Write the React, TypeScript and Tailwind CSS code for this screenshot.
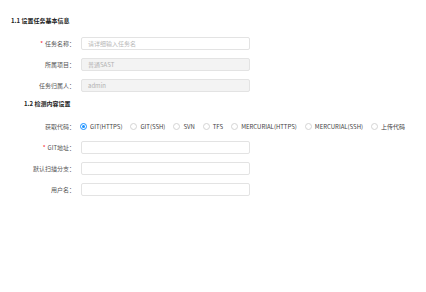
const radios = [
  "GIT(HTTPS)",
  "GIT(SSH)",
  "SVN",
  "TFS",
  "MERCURIAL(HTTPS)",
  "MERCURIAL(SSH)",
  "上传代码",
];

function Label({ text, required }: { text: string; required?: boolean }) {
  return (
    <div className="w-[75px] shrink-0 text-right text-[#555]">
      {required && <span className="mr-[2px] text-[#f5222d]">*</span>}
      {text}
    </div>
  );
}

function Field({
  label,
  required,
  placeholder,
  value,
  disabled,
}: {
  label: string;
  required?: boolean;
  placeholder?: string;
  value?: string;
  disabled?: boolean;
}) {
  return (
    <div className="flex h-[13px] items-center">
      <Label text={label} required={required} />
      <div
        className={`ml-[6px] flex h-[13px] w-[169px] items-center rounded-[2px] border border-[#e3e3e3] px-[6px] ${
          disabled ? "bg-[#f3f3f3] text-[#b0b0b0]" : "bg-white text-[#b8b8b8]"
        }`}
      >
        {value ?? placeholder}
      </div>
    </div>
  );
}

export default function App() {
  return (
    <div className="h-[292px] w-[426px] bg-white font-['Noto_Sans_CJK_SC',sans-serif] text-[6px] leading-[8px]">
      <div className="flex flex-col pt-[17px]">
        <div className="pl-[11px] font-bold text-[#222]">1.1 设置任务基本信息</div>

        <div className="mt-[12px] flex flex-col gap-[8px]">
          <Field label="任务名称：" required placeholder="请详细输入任务名" />
          <Field label="所属项目：" value="普通SAST" disabled />
          <Field label="任务归属人：" value="admin" disabled />
        </div>

        <div className="mt-[8px] pl-[24px] font-bold text-[#222]">1.2 检测内容设置</div>

        <div className="mt-[12px] flex h-[13px] items-center">
          <Label text="获取代码：" />
          <div className="ml-[5px] flex items-center gap-[8px]">
            {radios.map((r, i) => (
              <div key={r} className="flex items-center gap-[3px] text-[#444]">
                <span
                  className={`flex h-[7px] w-[7px] items-center justify-center rounded-full border ${
                    i === 0 ? "border-[#1890ff]" : "border-[#d4d4d4]"
                  }`}
                >
                  {i === 0 && <span className="h-[3px] w-[3px] rounded-full bg-[#1890ff]" />}
                </span>
                {r}
              </div>
            ))}
          </div>
        </div>

        <div className="mt-[8px] flex flex-col gap-[8px]">
          <Field label="GIT地址：" required />
          <Field label="默认扫描分支：" />
          <Field label="用户名：" />
        </div>
      </div>
    </div>
  );
}
